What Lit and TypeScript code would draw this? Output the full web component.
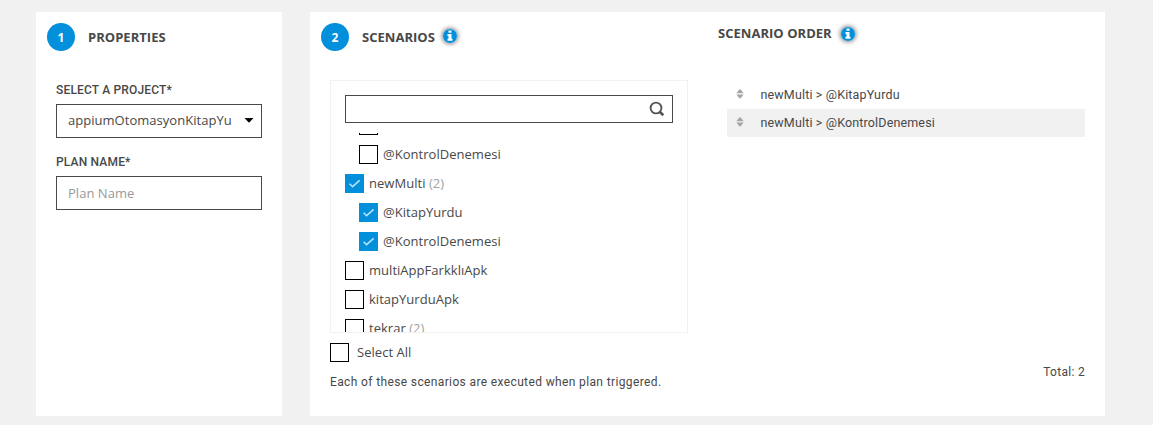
import { LitElement, html, css, nothing } from "lit";
import { customElement, property, state } from "lit/decorators.js";

@customElement("info-icon")
class InfoIcon extends LitElement {
  static styles = css`
    :host { display: block; width: 14px; height: 14px; border-radius: 50%; box-shadow: 0 0 4px 1px rgba(0, 0, 0, 0.5); }
    svg { display: block; }
  `;
  render() {
    return html`<svg width="14" height="14" viewBox="0 0 14 14">
      <circle cx="7" cy="7" r="7" fill="#028fdc" />
      <path d="M5.5 1.5h3v2.3h-3zM4.5 5h4v4.8h1v2h-5v-2h1V7h-1z" fill="#fff" />
    </svg>`;
  }
}

@customElement("check-box")
class CheckBox extends LitElement {
  @property({ type: Boolean, reflect: true }) checked = false;
  static styles = css`
    :host { display: block; box-sizing: border-box; flex: none; width: 19px; height: 19px; border: 1px solid #000; background: #fff; }
    :host([checked]) { border-color: #028fdc; background: #028fdc; }
    svg { display: block; }
  `;
  render() {
    return this.checked
      ? html`<svg width="17" height="17" viewBox="0 0 17 17"><path d="M3.6 8.7l3 3 7-6.4" fill="none" stroke="#b9e2f8" stroke-width="1.6" /></svg>`
      : nothing;
  }
}

interface Scenario {
  name: string;
  count?: number;
  nested?: boolean;
  checked?: boolean;
}

@customElement("app-root")
class AppRoot extends LitElement {
  @state() private scenarios: Scenario[] = [
    { name: "@KitapYurdu", nested: true },
    { name: "@KontrolDenemesi", nested: true },
    { name: "newMulti", count: 2, checked: true },
    { name: "@KitapYurdu", nested: true, checked: true },
    { name: "@KontrolDenemesi", nested: true, checked: true },
    { name: "multiAppFarkklıApk" },
    { name: "kitapYurduApk" },
    { name: "tekrar", count: 2 },
  ];
  @state() private order = ["newMulti > @KitapYurdu", "newMulti > @KontrolDenemesi"];

  static styles = css`
    :host { display: flex; box-sizing: border-box; gap: 28px; height: 425px; padding: 12px 48px 9px 36px; background: #f1f1f1; color: #484848; font: 13px/18px "Open Sans", sans-serif; letter-spacing: 0.03px; overflow: hidden; }
    * { box-sizing: border-box; }
    .card { background: #fff; }
    .properties { width: 246px; }
    .scenarios { width: 795px; display: flex; }
    .head { display: flex; align-items: center; height: 28px; margin: 11px 0 0 11px; }
    .num { width: 28px; height: 28px; border-radius: 50%; background: #028fdc; color: #fff; font-weight: 700; font-size: 12px; line-height: 29px; text-align: center; margin-right: 13px; }
    .title { font-weight: 700; font-size: 13px; white-space: nowrap; }
    .head info-icon { margin: -2px 0 0 8px; }
    .form { padding: 29px 20px 0; }
    .label { font: 500 12px/20px Roboto, sans-serif; letter-spacing: 0.17px; height: 24px; }
    .field { display: flex; align-items: center; justify-content: space-between; height: 34px; border: 1px solid #484848; padding: 0 7px 2px 11px; margin-bottom: 14px; white-space: nowrap; }
    .placeholder { color: #999; padding-bottom: 0; }
    .left { width: 378px; }
    .box { width: 358px; height: 253px; margin: 29px 0 0 20px; padding: 14px 14px 0; border: 1px solid #f1f1f1; display: flex; flex-direction: column; }
    .search { display: flex; flex: none; justify-content: flex-end; align-items: center; height: 28px; border: 1px solid #484848; padding-right: 7px; }
    .list { flex: 1; min-height: 0; margin-top: 10px; overflow: hidden; }
    .rows { margin-top: -22px; }
    .row { display: flex; align-items: center; height: 29px; gap: 5px; white-space: nowrap; }
    .row span, .all span { padding-bottom: 2px; }
    .nested { padding-left: 14px; }
    .count { color: #a2a2a2; }
    .all { display: flex; align-items: center; gap: 8px; margin: 10px 0 0 20px; height: 19px; }
    .note { font: 12px/18px Roboto, sans-serif; letter-spacing: 0.37px; margin: 11px 0 0 20px; white-space: nowrap; }
    .right { display: flex; flex-direction: column; width: 417px; padding: 0 20px 35px 30px; }
    .right .head { height: 28px; margin: 8px 0 0; }
    .right .title { padding-bottom: 2px; }
    .right .head info-icon { margin: -1px 0 0 9px; }
    .order { margin: 33px 0 0 9px; }
    .item { display: flex; align-items: center; height: 28px; padding-left: 9px; gap: 16.5px; font: 12.5px/18px Roboto, sans-serif; letter-spacing: 0.15px; }
    .item svg { margin-top: -2px; }
    .item:nth-child(even) { background: #f1f1f1; }
    .total { margin-top: auto; text-align: right; font: 12px/18px Roboto, sans-serif; letter-spacing: 0.3px; }
    svg { display: block; flex: none; }
  `;

  render() {
    return html`
      <section class="card properties">
        <div class="head"><div class="num">1</div><div class="title">PROPERTIES</div></div>
        <div class="form">
          <div class="label">SELECT A PROJECT*</div>
          <div class="field"><span>appiumOtomasyonKitapYu</span>
            <svg width="10" height="6" viewBox="0 0 10 6"><path d="M0.5 1h9L5 5.8z" fill="#000" /></svg>
          </div>
          <div class="label">PLAN NAME*</div>
          <div class="field placeholder">Plan Name</div>
        </div>
      </section>
      <section class="card scenarios">
        <div class="left">
          <div class="head"><div class="num">2</div><div class="title">SCENARIOS</div><info-icon></info-icon></div>
          <div class="box">
            <div class="search">
              <svg width="16" height="16" viewBox="0 0 16 16" fill="none" stroke="#555">
                <circle cx="7" cy="7" r="5.4" stroke-width="1.9" /><path d="M10.7 10.8l3.6 3.5" stroke-width="2.6" />
              </svg>
            </div>
            <div class="list"><div class="rows">
              ${this.scenarios.map((s) => html`
                <div class="row ${s.nested ? "nested" : ""}">
                  <check-box ?checked=${s.checked}></check-box>
                  <span>${s.name}${s.count ? html` <span class="count">(${s.count})</span>` : nothing}</span>
                </div>`)}
            </div></div>
          </div>
          <div class="all"><check-box></check-box><span>Select All</span></div>
          <div class="note">Each of these scenarios are executed when plan triggered.</div>
        </div>
        <div class="right">
          <div class="head"><div class="title">SCENARIO ORDER</div><info-icon></info-icon></div>
          <div class="order">
            ${this.order.map((o) => html`<div class="item">
              <svg width="8" height="10" viewBox="0 0 8 10"><path d="M0.4 4.2L3.2 0.5h1.6L7.6 4.2zM0.4 5.6h7.2L4.8 9.3H3.2z" fill="#a5a5a5" /></svg>
              <span>${o}</span></div>`)}
          </div>
          <div class="total">Total: 2</div>
        </div>
      </section>`;
  }
}
